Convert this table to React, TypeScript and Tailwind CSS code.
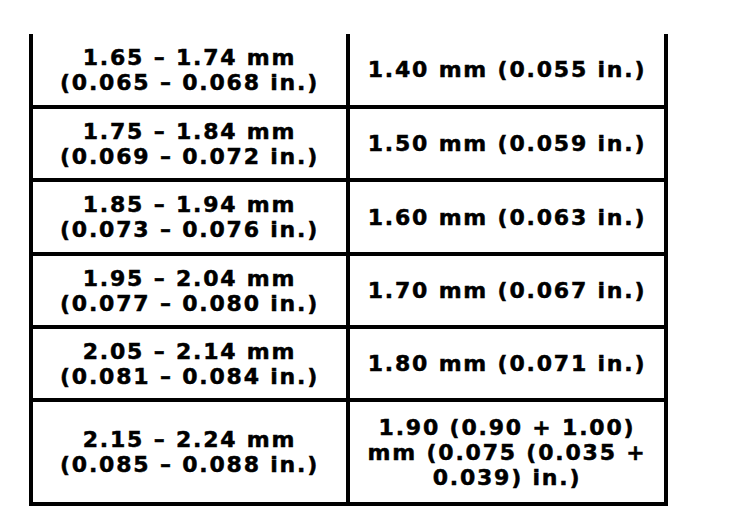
const rows = [
    { h: "h-[71px]", left: ["1.65 – 1.74 mm", "(0.065 – 0.068 in.)"], right: ["1.40 mm (0.055 in.)"] },
    { h: "h-[73px] border-t-4", left: ["1.75 – 1.84 mm", "(0.069 – 0.072 in.)"], right: ["1.50 mm (0.059 in.)"] },
    { h: "h-[74px] border-t-4", left: ["1.85 – 1.94 mm", "(0.073 – 0.076 in.)"], right: ["1.60 mm (0.063 in.)"] },
    { h: "h-[73px] border-t-4", left: ["1.95 – 2.04 mm", "(0.077 – 0.080 in.)"], right: ["1.70 mm (0.067 in.)"] },
    { h: "h-[73px] border-t-4", left: ["2.05 – 2.14 mm", "(0.081 – 0.084 in.)"], right: ["1.80 mm (0.071 in.)"] },
    { h: "h-[104px] border-t-4", left: ["2.15 – 2.24 mm", "(0.085 – 0.088 in.)"], right: ["1.90 (0.90 + 1.00)", "mm (0.075 (0.035 +", "0.039) in.)"] },
]

function Lines({ lines }: { lines: string[] }) {
    return (
        <p className="text-center">
            {lines.map((line, i) => (
                <span key={i} className="block whitespace-nowrap">{line}</span>
            ))}
        </p>
    )
}

export default function App() {
    return (
        <div className="w-[736px] h-[518px] bg-white pt-[34px] pl-[29px]">
            <div className="w-[639px] flex flex-col border-x-4 border-b-4 border-black text-black font-['DejaVu_Sans',sans-serif] font-bold text-[22px] leading-[25px] tracking-[1.8px] [-webkit-text-stroke:0.5px_black]">
                {rows.map((row, index) => (
                    <div key={index} className={`${row.h} flex flex-row border-black`}>
                        <div className="w-[317px] border-r-4 border-black flex items-center justify-center">
                            <Lines lines={row.left} />
                        </div>
                        <div className="flex-1 flex items-center justify-center">
                            <Lines lines={row.right} />
                        </div>
                    </div>
                ))}
            </div>
        </div>
    )
}
